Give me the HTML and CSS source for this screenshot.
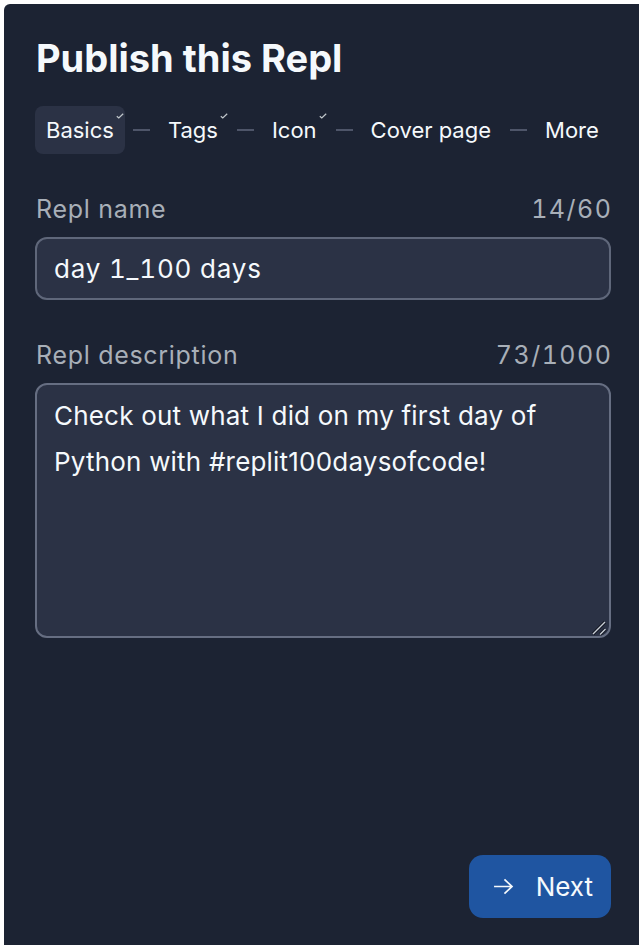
FILE: index.html
```html
<!DOCTYPE html>
<html lang="en">
<head>
<meta charset="utf-8">
<title>Publish this Repl</title>
<link rel="stylesheet" href="styles.css">
</head>
<body>
<div class="panel">
  <h1 class="title">Publish this Repl</h1>
  <nav class="steps">
    <div class="step active">Basics<svg class="check" viewBox="0 0 8 6"><path d="M0.8 3.2 L2.8 5 L7.2 0.8"/></svg></div>
    <span class="sep"></span>
    <div class="step">Tags<svg class="check" viewBox="0 0 8 6"><path d="M0.8 3.2 L2.8 5 L7.2 0.8"/></svg></div>
    <span class="sep"></span>
    <div class="step">Icon<svg class="check" viewBox="0 0 8 6"><path d="M0.8 3.2 L2.8 5 L7.2 0.8"/></svg></div>
    <span class="sep"></span>
    <div class="step">Cover page</div>
    <span class="sep"></span>
    <div class="step">More</div>
  </nav>
  <div class="field">
    <div class="field-head"><label class="label" for="name">Repl name</label><span class="count">14/60</span></div>
    <input id="name" class="input" type="text" value="day 1_100 days">
  </div>
  <div class="field">
    <div class="field-head"><label class="label" for="desc">Repl description</label><span class="count">73/1000</span></div>
    <div class="textarea-wrap">
      <textarea id="desc" class="textarea">Check out what I did on my first day of Python with #replit100daysofcode!</textarea>
      <svg class="grip" viewBox="0 0 16 16"><path class="grip-shadow" d="M2 14 L14 2 M9 14.5 L14.5 9"/><path class="grip-line" d="M2 14 L14 2 M9 14.5 L14.5 9"/></svg>
    </div>
  </div>
  <div class="spacer"></div>
  <div class="actions">
    <button class="next" type="button"><svg class="arrow" viewBox="0 0 22 18"><path d="M1 9 H20 M12 1.5 L20 9 L12 16.5"/></svg><span>Next</span></button>
  </div>
</div>
</body>
</html>
```
FILE: styles.css
```css
html, body {
  margin: 0;
  padding: 0;
  background: #ffffff;
}
body {
  font-family: Inter, "Noto Sans", sans-serif;
  color: #f5f9fc;
}
.panel {
  margin: 4px 3px 5px 4px;
  height: 941px;
  box-sizing: border-box;
  background: #1c2333;
  border-radius: 6px 0 0 0;
  padding: 30px 28px 27px 31px;
  display: flex;
  flex-direction: column;
}
.title {
  margin: 0 0 0 1px;
  font-size: 38px;
  line-height: 48px;
  font-weight: 700;
  color: #f5f9fc;
}
.steps {
  margin-top: 24px;
  display: flex;
  align-items: center;
  height: 48px;
}
.step {
  position: relative;
  height: 48px;
  display: flex;
  align-items: center;
  padding: 0 11px;
  font-size: 22px;
  border-radius: 8px;
  color: #f5f9fc;
  white-space: nowrap;
}
.step.active {
  background: #2b3245;
}
.check {
  position: absolute;
  right: 1px;
  top: 7px;
  width: 8px;
  height: 6px;
  fill: none;
  stroke: #c2c8cc;
  stroke-width: 1.2;
}
.sep {
  width: 17px;
  height: 2px;
  background: #4e5569;
  margin: 0 7px 0 8px;
}
.field {
  margin-top: 39px;
  display: flex;
  flex-direction: column;
}
.field-head {
  display: flex;
  justify-content: space-between;
  align-items: center;
  height: 32px;
  margin: 0 0 12px 1px;
  font-size: 25px;
  color: #a8afb8;
}
.label {
  color: #a8afb8;
  letter-spacing: 0.7px;
}
.count {
  color: #a8afb8;
  letter-spacing: 1.5px;
  margin-right: -1.5px;
  font-variant-numeric: tabular-nums;
}
.input, .textarea {
  box-sizing: border-box;
  width: 100%;
  margin: 0;
  background: #2b3245;
  border: 2px solid #5f677a;
  border-radius: 12px;
  color: #f5f9fc;
  font-family: Inter, "Noto Sans", sans-serif;
  font-size: 26px;
  outline: none;
  color-scheme: dark;
}
.input {
  height: 63px;
  padding: 0 17px;
  letter-spacing: 0.8px;
  font-variant-numeric: tabular-nums;
}
.textarea-wrap {
  position: relative;
}
.textarea {
  display: block;
  height: 255px;
  padding: 8px 17px;
  line-height: 46px;
  letter-spacing: 0.2px;
  resize: none;
  border-color: #666e82;
}
.grip {
  position: absolute;
  right: 4px;
  bottom: 2px;
  width: 16px;
  height: 16px;
  fill: none;
}
.grip-shadow {
  stroke: #141824;
  stroke-width: 3.2;
}
.grip-line {
  stroke: #c9ced6;
  stroke-width: 1.4;
}
.spacer {
  flex: 1;
}
.actions {
  display: flex;
  justify-content: flex-end;
}
.next {
  display: flex;
  align-items: center;
  gap: 22px;
  height: 63px;
  padding: 0 18px 0 24px;
  background: #1f55a1;
  border: none;
  border-radius: 14px;
  color: #f5f9fc;
  font-family: Inter, "Noto Sans", sans-serif;
  font-size: 26px;
}
.arrow {
  width: 21px;
  height: 17px;
  fill: none;
  stroke: #f5f9fc;
  stroke-width: 1.8;
}
```
